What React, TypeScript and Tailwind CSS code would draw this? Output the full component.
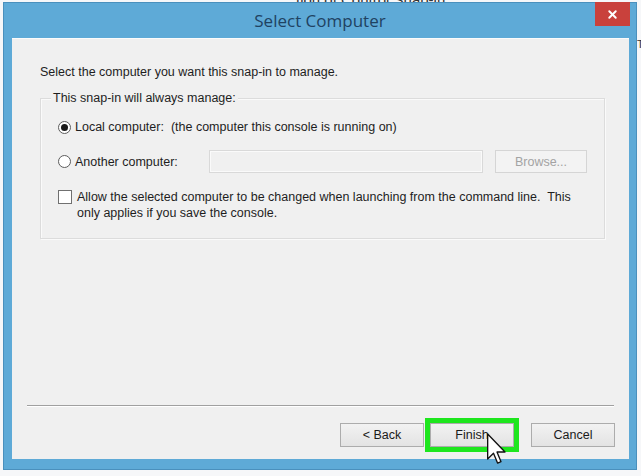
import { X } from "lucide-react";

const font = { fontFamily: '"Liberation Sans", Arial, sans-serif' };

const Radio = ({ checked }: { checked?: boolean }) => (
  <span className="w-[13px] h-[13px] rounded-full border border-[#5c5c5c] bg-white flex items-center justify-center shrink-0">
    {checked && <span className="w-[7px] h-[7px] rounded-full bg-[#1a1a1a]" />}
  </span>
);

const Button = ({ label }: { label: string }) => (
  <div className="w-[84px] h-[24px] border border-[#acacac] bg-gradient-to-b from-[#f2f2f2] to-[#e3e3e3] flex items-center justify-center text-[12.5px] text-[#1a1a1a]">
    {label}
  </div>
);

export default function App() {
  return (
    <div className="relative w-[641px] h-[476px] bg-[#f6f7f9] overflow-hidden" style={font}>
      {/* text of the window behind */}
      <div className="absolute top-[-11px] left-[296px] text-[15px] text-[#333]">
        tion of Control Snap-in
      </div>
      <div className="absolute top-[36px] left-[637px] text-[11px] text-[#333]">T</div>

      <div className="relative ml-[3px] mt-[2px] w-[634px] h-[468px] bg-[#5eaad7] border border-[#4a90bd] flex flex-col">
        {/* title bar */}
        <div className="relative h-[35px] flex items-center justify-center">
          <span className="text-[17px] text-[#1f4262] pt-[1px]" style={{ fontFamily: '"Open Sans", sans-serif' }}>
            Select Computer
          </span>
          <div className="absolute top-[-1px] right-[6px] w-[35px] h-[24px] bg-[#c9413c] flex items-center justify-center">
            <X size={13} strokeWidth={3.5} className="text-white" />
          </div>
        </div>

        {/* content */}
        <div className="ml-[8px] mr-[7px] mb-[10px] flex-1 bg-[#f0f0f0] border-t border-[#fbfbfb] flex flex-col">
          <div className="ml-[28px] mt-[25px] text-[12.5px] leading-[16px] text-[#1e1e1e]">
            Select the computer you want this snap-in to manage.
          </div>

          {/* group box */}
          <div className="relative ml-[28px] mt-[18px] w-[565px] h-[141px] border border-[#dcdcdc] shadow-[inset_1px_1px_0_#fafafa,1px_1px_0_#fafafa] text-[12.5px] leading-[16px] text-[#1e1e1e]">
            <span className="absolute top-[-9px] left-[10px] px-[2px] bg-[#f0f0f0]">
              This snap-in will always manage:
            </span>

            <div className="ml-[17px] mt-[20px] flex items-center gap-[4px] h-[16px]">
              <Radio checked />
              <span>Local computer:&nbsp;&nbsp;(the computer this console is running on)</span>
            </div>

            <div className="ml-[17px] mt-[15px] flex items-center h-[23px]">
              <div className="flex items-center gap-[4px] w-[151px]">
                <Radio />
                <span>Another computer:</span>
              </div>
              <div className="w-[274px] h-[23px] border border-[#d9d9d9] bg-[#f0f0f0] shadow-[inset_0_0_0_1px_#fafafa]" />
              <div className="ml-[12px] w-[92px] h-[23px] border border-[#d5d5d5] bg-[#f3f3f3] flex items-center justify-center text-[#a3a3a3]">
                Browse...
              </div>
            </div>

            <div className="ml-[17px] mt-[16px] flex items-start gap-[5px]">
              <span className="mt-[1px] w-[14px] h-[14px] border border-[#707070] bg-white shrink-0" />
              <span className="w-[510px]">
                Allow the selected computer to be changed when launching from the command line.&nbsp; This only applies if you save the console.
              </span>
            </div>
          </div>

          <div className="flex-1" />

          {/* separator */}
          <div className="mx-[15px] h-[2px] border-t border-[#a0a0a0] border-b-white border-b" />

          {/* buttons */}
          <div className="mt-[11px] mb-[7px] ml-[328px] flex items-center">
            <Button label="< Back" />
            <div className="ml-[1px] border-[5px] border-[#1ee61e] p-0">
              <Button label="Finish" />
            </div>
            <div className="ml-[12px]">
              <Button label="Cancel" />
            </div>
          </div>
        </div>
      </div>

      {/* mouse pointer */}
      <svg className="absolute left-[486px] top-[432px]" width="20" height="34" viewBox="0 0 12 20">
        <path
          d="M1 1 L1 16 L4.5 12.5 L7 18.5 L9 17.6 L6.6 11.8 L11.4 11.8 Z"
          fill="#fff"
          stroke="#111"
          strokeWidth="0.8"
          strokeLinejoin="round"
        />
      </svg>
    </div>
  );
}
